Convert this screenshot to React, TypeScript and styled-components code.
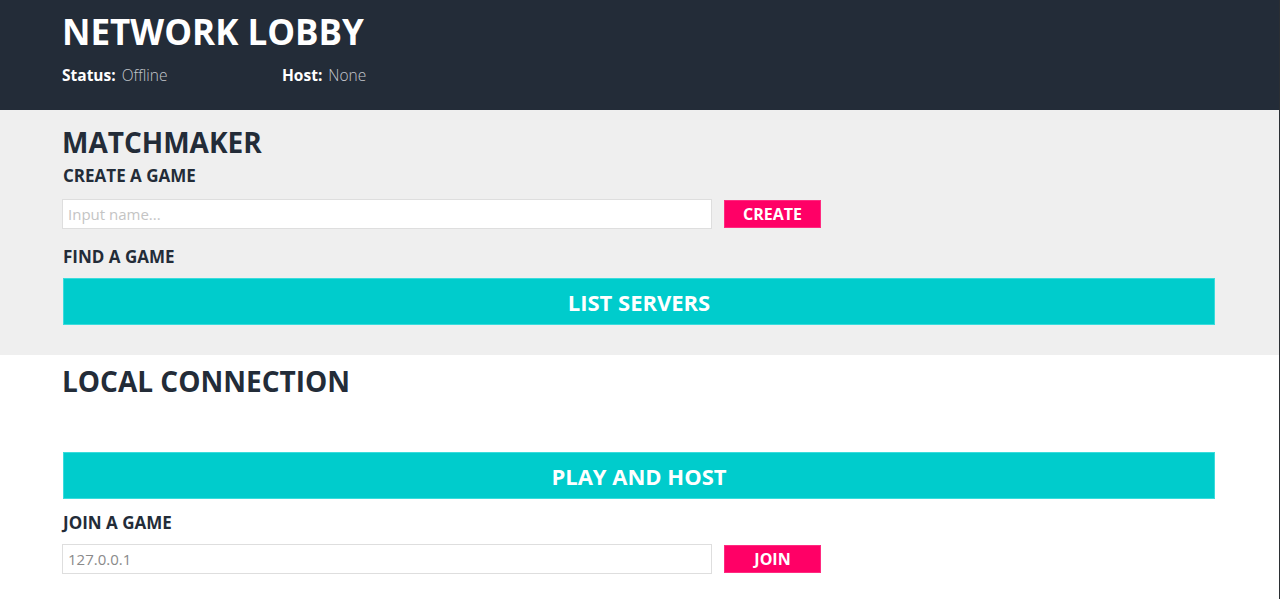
import React from "react";
import styled, { createGlobalStyle } from "styled-components";

const Global = createGlobalStyle`
  html, body { margin: 0; padding: 0; background: #ffffff; }
  body { font-family: "Open Sans", "Liberation Sans", sans-serif; }
  * { box-sizing: border-box; }
`;

const Page = styled.div`
  width: 1280px;
  min-height: 599px;
  border-right: 1px solid #2b2f33;
  background: #ffffff;
`;

const Header = styled.header`
  background: #232c38;
  padding: 12px 64px 24px 62px;
  height: 110px;
`;

const Title = styled.h1`
  margin: 0;
  font-size: 35px;
  line-height: 40px;
  font-weight: 700;
  color: #ffffff;
`;

const StatusRow = styled.div`
  display: flex;
  margin-top: 13px;
`;

const StatusItem = styled.div`
  width: 220px;
  display: flex;
  gap: 6px;
  font-size: 15.5px;
  line-height: 20px;
`;

const StatusLabel = styled.span`
  font-weight: 700;
  color: #ffffff;
`;

const StatusValue = styled.span`
  font-weight: 300;
  color: #c3c7cc;
`;

const Section = styled.section<{ $bg: string; $top: number; $bottom: number }>`
  background: ${(p) => p.$bg};
  padding: ${(p) => p.$top}px 65px ${(p) => p.$bottom}px 62px;
`;

const SectionTitle = styled.h2`
  margin: 0;
  font-size: 28px;
  line-height: 34px;
  font-weight: 700;
  color: #232c38;
`;

const Label = styled.h3<{ $mt: number }>`
  margin: ${(p) => p.$mt}px 0 0 1px;
  font-size: 17px;
  line-height: 20px;
  font-weight: 700;
  color: #232c38;
`;

const InputRow = styled.div<{ $mt: number }>`
  display: flex;
  align-items: center;
  gap: 12px;
  margin-top: ${(p) => p.$mt}px;
`;

const TextInput = styled.input`
  width: 650px;
  height: 30px;
  border: 1px solid #dedede;
  background: #ffffff;
  padding: 0 5px;
  font-family: "Open Sans", "Liberation Sans", sans-serif;
  font-size: 15px;
  color: #8a8a8a;
  outline: none;
  &::placeholder { color: #c4c4c4; }
`;

const SmallButton = styled.button`
  width: 97px;
  height: 28px;
  border: 1px solid #ff2a80;
  background: #ff0066;
  color: #ffffff;
  font-family: "Open Sans", "Liberation Sans", sans-serif;
  font-size: 16px;
  font-weight: 700;
  padding: 0;
  cursor: pointer;
`;

const BigButton = styled.button<{ $mt: number }>`
  display: block;
  width: 1152px;
  height: 47px;
  margin: ${(p) => p.$mt}px 0 0 1px;
  border: 1px solid #3adcdc;
  background: #00cccc;
  color: #ffffff;
  font-family: "Open Sans", "Liberation Sans", sans-serif;
  font-size: 22px;
  font-weight: 700;
  padding: 0;
  cursor: pointer;
`;

export default function App() {
  return (
    <Page>
      <Global />
      <Header>
        <Title>NETWORK LOBBY</Title>
        <StatusRow>
          <StatusItem>
            <StatusLabel>Status:</StatusLabel>
            <StatusValue>Offline</StatusValue>
          </StatusItem>
          <StatusItem>
            <StatusLabel>Host:</StatusLabel>
            <StatusValue>None</StatusValue>
          </StatusItem>
        </StatusRow>
      </Header>
      <Section $bg="#efefef" $top={15} $bottom={30}>
        <SectionTitle>MATCHMAKER</SectionTitle>
        <Label $mt={7}>CREATE A GAME</Label>
        <InputRow $mt={13}>
          <TextInput placeholder="Input name..." />
          <SmallButton>CREATE</SmallButton>
        </InputRow>
        <Label $mt={18}>FIND A GAME</Label>
        <BigButton $mt={11}>LIST SERVERS</BigButton>
      </Section>
      <Section $bg="#ffffff" $top={9} $bottom={24}>
        <SectionTitle>LOCAL CONNECTION</SectionTitle>
        <BigButton $mt={54}>PLAY AND HOST</BigButton>
        <Label $mt={14}>JOIN A GAME</Label>
        <InputRow $mt={11}>
          <TextInput defaultValue="127.0.0.1" />
          <SmallButton>JOIN</SmallButton>
        </InputRow>
      </Section>
    </Page>
  );
}
